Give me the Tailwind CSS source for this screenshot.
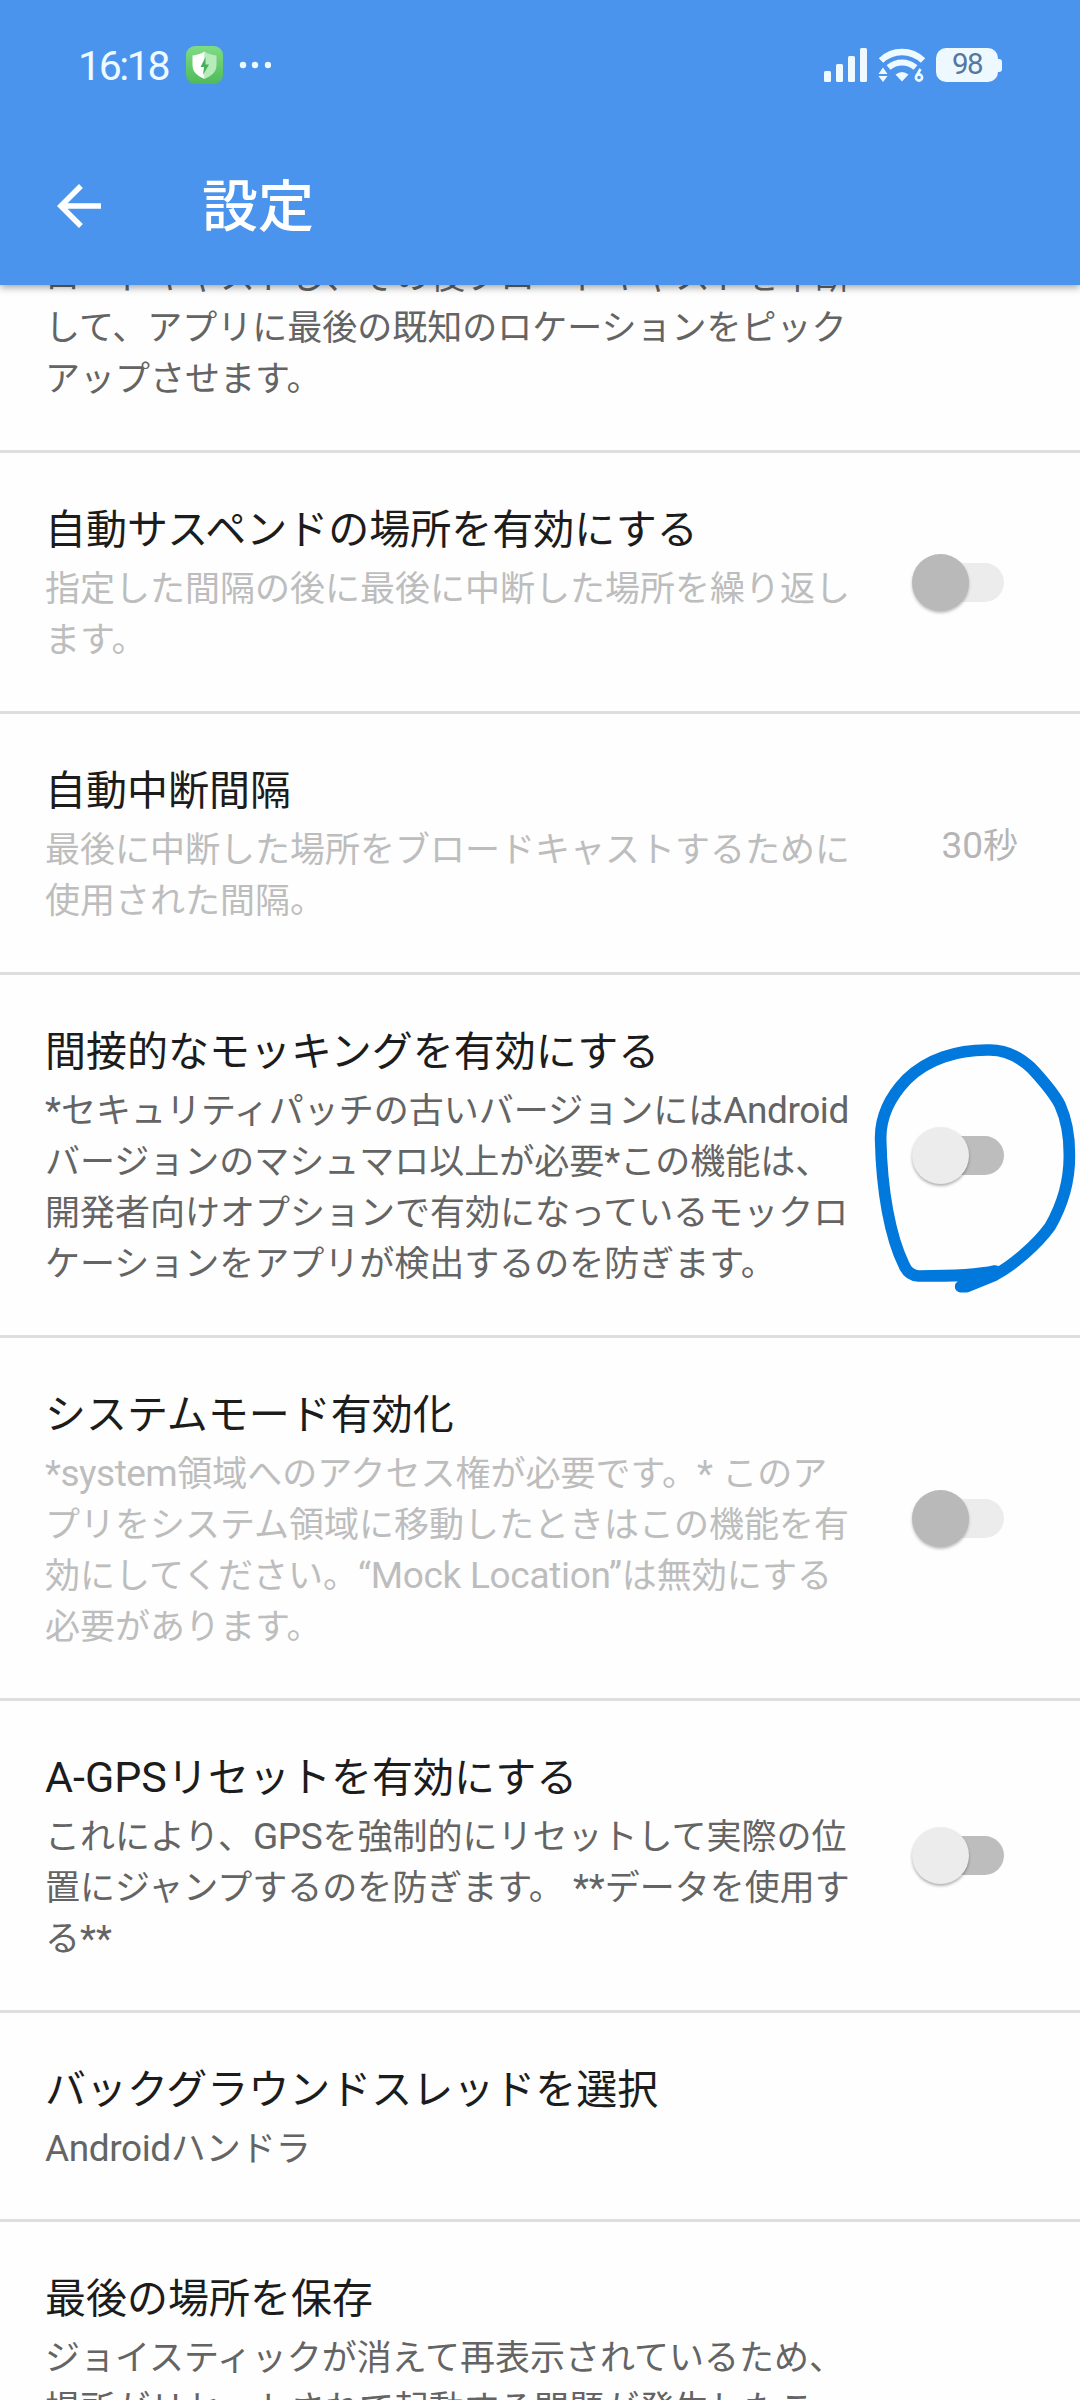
<!DOCTYPE html>
<html lang="ja">
<head>
<meta charset="utf-8">
<title>設定</title>
<script src="https://cdn.jsdelivr.net/npm/@tailwindcss/browser@4"></script>
</head>
<body class="w-[1080px] h-[2400px] overflow-hidden bg-[#fefefe] font-['Noto_Sans_CJK_JP',sans-serif]">
<div class="relative w-[1080px] h-[2400px] overflow-hidden flex flex-col">

  <header class="relative z-10 h-[285px] shrink-0 bg-[#4a94ed] text-white shadow-[0_2px_8px_rgba(0,0,0,0.4)] flex flex-col">
    <div class="h-[130px] pl-[78px] pr-[78px] flex items-center justify-between">
      <div class="flex items-center">
        <span class="w-[107px] pt-[2px] font-[Roboto] text-[41px] leading-none tracking-[-2.4px] text-[#eefaff]">16:18</span>
        <svg class="w-[39px] h-[39px]" viewBox="0 0 39 39">
          <defs><linearGradient id="g" x1="0" y1="0" x2="0" y2="1"><stop offset="0" stop-color="#7fdc84"/><stop offset="1" stop-color="#4fba5a"/></linearGradient></defs>
          <rect x="1" width="37" height="38" rx="9" fill="url(#g)"/>
          <path d="M19.500 5.500c4 2.600 8 3.600 12 4v9.500c0 7-5 11-12 14z" fill="#b5ecba"/>
          <path d="M19.500 5.500c-4 2.600-8 3.600-12 4v9.500c0 7 5 11 12 14z" fill="#fff"/>
          <path d="M20.500 11l-5 10h3.500l-1 8 6-10.500h-3.500z" fill="#4cae5b"/>
        </svg>
        <svg class="ml-[15px] w-[32px] h-[8px]" viewBox="0 0 32 8" fill="#eefaff"><circle cx="4" cy="4" r="3.200"/><circle cx="16" cy="4" r="3.200"/><circle cx="29" cy="4" r="3.200"/></svg>
      </div>
      <div class="flex items-center">
        <svg class="w-[44px] h-[34px]" viewBox="0 0 44 34" fill="#eefaff"><rect y="23" width="7" height="11" rx="1.500"/><rect x="12" y="16" width="7" height="18" rx="1.500"/><rect x="24" y="8" width="7" height="26" rx="1.500"/><rect x="36" width="7" height="34" rx="1.500"/></svg>
        <svg class="ml-[9px] w-[50px] h-[34px]" viewBox="0 0 50 34" fill="none" stroke="#eefaff">
          <path d="M4 12.500Q13 4 25 4T46 12.500" stroke-width="6.500"/>
          <path d="M11.500 19.500Q17.500 14.500 25 14.500T38.500 19.500" stroke-width="6"/>
          <path d="M18.500 26.500Q25 21.500 31.500 26.500L25 33.500z" fill="#eefaff" stroke="none"/>
          <path d="M1.500 26l4.500-6.500 4.500 6.500zM1.500 28h9l-4.500 6z" fill="#eefaff" stroke="none"/>
          <path d="M43.500 21l-4 7" stroke-width="2.600"/><circle cx="42" cy="29.500" r="3.100" stroke-width="2.600"/>
        </svg>
        <div class="ml-[9px] w-[62px] h-[34px] rounded-[10px] bg-[#eef8ff] flex items-center justify-center font-[Roboto] text-[29.500px] leading-none tracking-[-1.500px] text-[#54789f]">98</div>
        <div class="w-[4px] h-[13px] rounded-r-[3px] bg-[#eef8ff]"></div>
      </div>
    </div>
    <div class="h-[152px] pl-[46px] flex items-center">
      <svg class="w-[66px] h-[66px]" viewBox="0 0 24 24" fill="#fff"><path d="M20 11H7.830l5.590-5.590L12 4l-8 8 8 8 1.410-1.410L7.830 13H20v-2z"/></svg>
      <h1 class="ml-[90px] mb-[8px] text-[56px] leading-none font-medium">設定</h1>
    </div>
  </header>

  <main class="flex flex-col text-[35px] leading-[51px] text-[#646464] whitespace-nowrap">
    <section class="h-[168px] shrink-0 border-b-[3px] border-[#dedede] pl-[45px] pb-[49px] flex flex-col justify-end">
      <p>ロードキャストし、その後ブロードキャストを中断<br>して、アプリに最後の既知のロケーションをピック<br>アップさせます。</p>
    </section>

    <section class="h-[261px] shrink-0 border-b-[3px] border-[#dedede] pl-[45px] pr-[76px] flex items-center justify-between">
      <div class="self-start pt-[44px]">
        <h2 class="mb-[5px] text-[41px] leading-[58px] text-[#1c1c1c]">自動サスペンドの場所を有効にする</h2>
        <p class="text-[#bdbdbd]">指定した間隔の後に最後に中断した場所を繰り返し<br>ます。</p>
      </div>
      <div class="w-[92px] h-[58px] flex items-center"><div class="z-1 w-[57px] h-[57px] rounded-full bg-[#b9b9b9] shadow-[0_2px_3px_rgba(0,0,0,0.25)]"></div><div class="-ml-[30px] w-[65px] h-[39px] rounded-full bg-[#ececec]"></div></div>
    </section>

    <section class="h-[261px] shrink-0 border-b-[3px] border-[#dedede] pl-[45px] pr-[62px] flex items-center justify-between">
      <div class="self-start pt-[44px]">
        <h2 class="mb-[5px] text-[41px] leading-[58px] text-[#1c1c1c]">自動中断間隔</h2>
        <p class="text-[#bdbdbd]">最後に中断した場所をブロードキャストするために<br>使用された間隔。</p>
      </div>
      <div class="pb-[2px] text-[#b5b5b5]"><span class="font-[Roboto] text-[37px] leading-none">30</span>秒</div>
    </section>

    <section class="h-[363px] shrink-0 border-b-[3px] border-[#dedede] pl-[45px] pr-[76px] flex items-center justify-between">
      <div class="self-start pt-[44px]">
        <h2 class="mb-[5px] text-[41px] leading-[58px] text-[#1c1c1c]">間接的なモッキングを有効にする</h2>
        <p><span class="font-[Roboto] text-[37px] leading-none">*</span>セキュリティパッチの古いバージョンには<span class="font-[Roboto] text-[37px] leading-none tracking-[-0.400px]">Android</span><br>バージョンのマシュマロ以上が必要<span class="font-[Roboto] text-[37px] leading-none">*</span>この機能は、<br>開発者向けオプションで有効になっているモックロ<br>ケーションをアプリが検出するのを防ぎます。</p>
      </div>
      <div class="w-[92px] h-[58px] flex items-center"><div class="z-1 w-[57px] h-[57px] rounded-full bg-[#ececec] shadow-[0_2px_3px_rgba(0,0,0,0.3)]"></div><div class="-ml-[30px] w-[65px] h-[39px] rounded-full bg-[#bdbdbd]"></div></div>
    </section>

    <section class="h-[363px] shrink-0 border-b-[3px] border-[#dedede] pl-[45px] pr-[76px] flex items-center justify-between">
      <div class="self-start pt-[44px]">
        <h2 class="mb-[5px] text-[41px] leading-[58px] text-[#1c1c1c]">システムモード有効化</h2>
        <p class="text-[#bdbdbd]"><span class="font-[Roboto] text-[37px] leading-none tracking-[-0.500px]">*system</span>領域へのアクセス権が必要です。<span class="font-[Roboto] text-[37px] leading-none">* </span>このア<br>プリをシステム領域に移動したときはこの機能を有<br>効にしてください。<span class="font-[Roboto] text-[37px] leading-none tracking-[-0.300px]">“Mock Location”</span>は無効にする<br>必要があります。</p>
      </div>
      <div class="w-[92px] h-[58px] flex items-center"><div class="z-1 w-[57px] h-[57px] rounded-full bg-[#b9b9b9] shadow-[0_2px_3px_rgba(0,0,0,0.25)]"></div><div class="-ml-[30px] w-[65px] h-[39px] rounded-full bg-[#ececec]"></div></div>
    </section>

    <section class="h-[312px] shrink-0 border-b-[3px] border-[#dedede] pl-[45px] pr-[76px] flex items-center justify-between">
      <div class="self-start pt-[44px]">
        <h2 class="mb-[5px] text-[41px] leading-[58px] text-[#1c1c1c]"><span class="font-[Roboto] text-[43px] leading-none">A-GPS</span>リセットを有効にする</h2>
        <p>これにより、<span class="font-[Roboto] text-[37px] leading-none tracking-[-0.300px]">GPS</span>を強制的にリセットして実際の位<br>置にジャンプするのを防ぎます。<span class="font-[Roboto] text-[37px] leading-none"> **</span>データを使用す<br>る<span class="font-[Roboto] text-[37px] leading-none">**</span></p>
      </div>
      <div class="w-[92px] h-[58px] flex items-center"><div class="z-1 w-[57px] h-[57px] rounded-full bg-[#ececec] shadow-[0_2px_3px_rgba(0,0,0,0.3)]"></div><div class="-ml-[30px] w-[65px] h-[39px] rounded-full bg-[#bdbdbd]"></div></div>
    </section>

    <section class="h-[209px] shrink-0 border-b-[3px] border-[#dedede] pl-[45px] pt-[44px]">
      <h2 class="mb-[5px] text-[41px] leading-[58px] text-[#1c1c1c]">バックグラウンドスレッドを選択</h2>
      <p><span class="font-[Roboto] text-[37px] leading-none tracking-[-0.400px]">Android</span>ハンドラ</p>
    </section>

    <section class="h-[414px] shrink-0 pl-[45px] pr-[76px] flex items-center justify-between">
      <div class="self-start pt-[44px]">
        <h2 class="mb-[5px] text-[41px] leading-[58px] text-[#1c1c1c]">最後の場所を保存</h2>
        <p>ジョイスティックが消えて再表示されているため、<br>場所がリセットされて起動する問題が発生したこ</p>
      </div>
      <div class="w-[92px] h-[58px] flex items-center"><div class="z-1 w-[57px] h-[57px] rounded-full bg-[#ececec] shadow-[0_2px_3px_rgba(0,0,0,0.3)]"></div><div class="-ml-[30px] w-[65px] h-[39px] rounded-full bg-[#bdbdbd]"></div></div>
    </section>
  </main>

  <!-- hand-drawn marker around the switch -->
  <svg class="absolute left-[840px] top-[1020px] w-[240px] h-[290px]" viewBox="0 0 720 870" fill="none" stroke="#0078dc" stroke-width="35" stroke-linecap="round" stroke-linejoin="round">
    <path d="M465 753C410 766 340 768 235 768Q205 766 192 735C150 650 125 510 122 360C120 290 150 230 200 178C260 118 350 88 450 90C500 90 540 112 575 145C605 178 640 215 660 255C680 300 688 350 688 400C690 480 670 550 630 620C590 675 520 735 465 765L380 800H362L400 780"/>
  </svg>
</div>
</body>
</html>
